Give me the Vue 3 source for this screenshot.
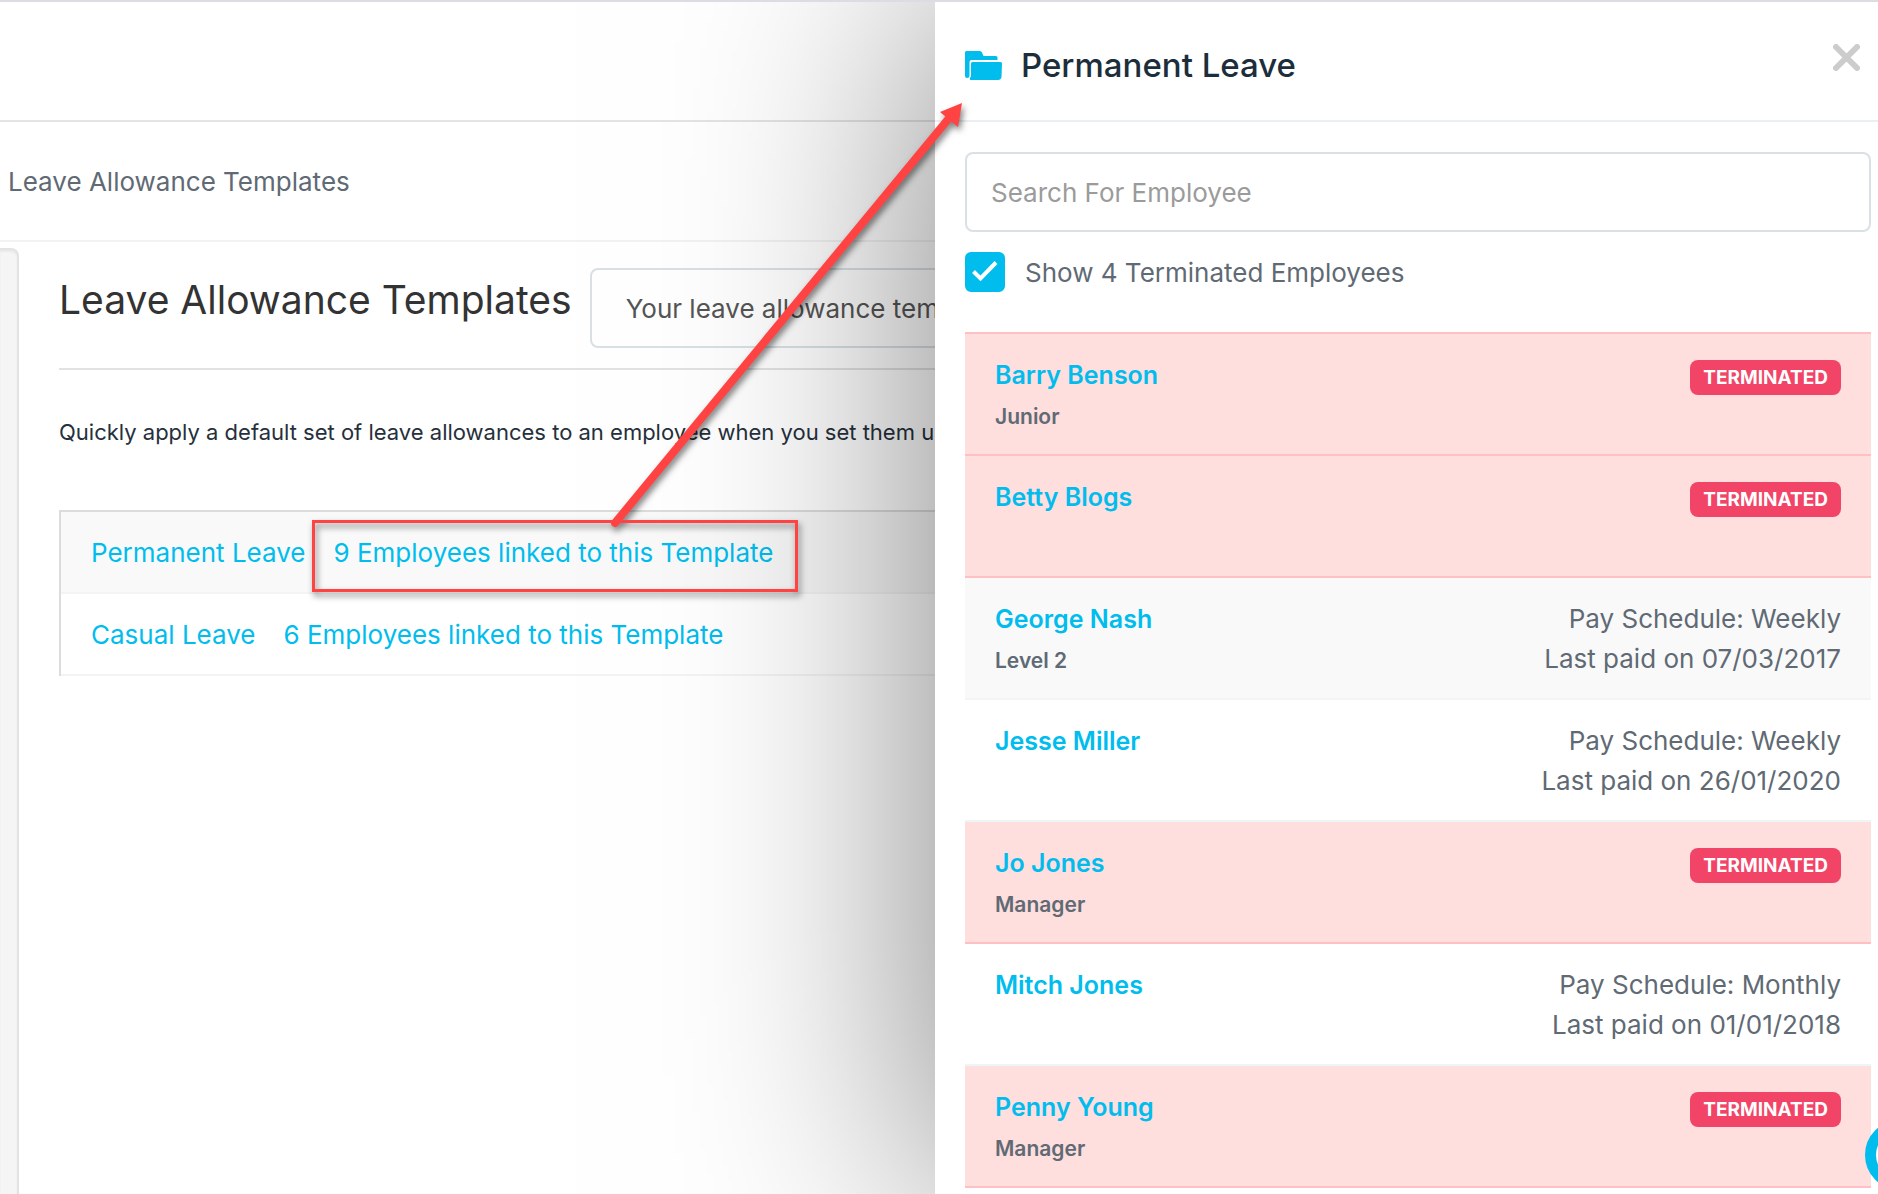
<script setup>
import { ref, computed } from 'vue'

const templates = [
  { name: 'Permanent Leave', count: 9 },
  { name: 'Casual Leave', count: 6 }
]

const employees = [
  { name: 'Barry Benson', role: 'Junior', terminated: true },
  { name: 'Betty Blogs', role: '', terminated: true },
  { name: 'George Nash', role: 'Level 2', schedule: 'Weekly', paid: '07/03/2017' },
  { name: 'Jesse Miller', role: '', schedule: 'Weekly', paid: '26/01/2020' },
  { name: 'Jo Jones', role: 'Manager', terminated: true },
  { name: 'Mitch Jones', role: '', schedule: 'Monthly', paid: '01/01/2018' },
  { name: 'Penny Young', role: 'Manager', terminated: true }
]

const search = ref('')
const showTerminated = ref(true)

const visible = computed(() =>
  employees.filter(
    (e) =>
      (showTerminated.value || !e.terminated) &&
      e.name.toLowerCase().includes(search.value.toLowerCase())
  )
)
</script>

<template>
  <div class="page">
    <header class="topbar"></header>
    <nav class="crumbs" aria-label="Breadcrumb">Leave Allowance Templates</nav>

    <div class="body">
      <aside class="well"></aside>
      <main class="content">
        <div class="heading">
          <h1>Leave Allowance Templates</h1>
          <button type="button" class="picker">Your leave allowance templates</button>
        </div>
        <p class="intro">
          Quickly apply a default set of leave allowances to an employee when you set them up
        </p>
        <table class="templates">
          <tbody>
            <tr v-for="t in templates" :key="t.name">
              <td>
                <a href="#">{{ t.name }}</a>
                <a href="#" class="linked">{{ t.count }} Employees linked to this Template</a>
              </td>
            </tr>
          </tbody>
        </table>
      </main>
    </div>

    <section class="drawer" aria-label="Permanent Leave">
      <header class="drawer-head">
        <svg class="folder" viewBox="0 0 37 30" width="37" height="30" aria-hidden="true">
          <path
            d="M1.500 0H15Q16.500 0 17 1.500L18.500 5H31Q32.500 5 32.500 6.500V9H6.500Q4.500 9 4.500 11V25Q4.500 27 2 27Q0 27 0 25V1.500Q0 0 1.500 0Z"
          />
          <path d="M7.500 11H35.500Q37 11 37 12.500L36.500 26Q36 29 33 29H6Q4.500 29 4.800 27.500L6 25V12.500Q6 11 7.500 11Z" />
        </svg>
        <h2>Permanent Leave</h2>
        <button type="button" class="close" aria-label="Close">
          <svg viewBox="0 0 27 27" width="27" height="27" aria-hidden="true">
            <path d="M3 3L24 24M24 3L3 24" />
          </svg>
        </button>
      </header>

      <div class="drawer-body">
        <input
          v-model="search"
          class="search"
          type="text"
          placeholder="Search For Employee"
          aria-label="Search For Employee"
        />
        <label class="toggle">
          <span class="box">
            <input v-model="showTerminated" type="checkbox" />
            <svg viewBox="0 0 40 40" width="40" height="40" aria-hidden="true">
              <path d="M8.500 19.500L15.500 26.500L31 10.500" />
            </svg>
          </span>
          <span class="toggle-text">Show 4 Terminated Employees</span>
        </label>

        <ul class="list">
          <li v-for="e in visible" :key="e.name" :class="{ terminated: e.terminated }">
            <div class="who">
              <a href="#">{{ e.name }}</a>
              <span class="role">{{ e.role }}</span>
            </div>
            <span v-if="e.terminated" class="badge">TERMINATED</span>
            <div v-else class="pay">
              <span>Pay Schedule: {{ e.schedule }}</span>
              <span>Last paid on {{ e.paid }}</span>
            </div>
          </li>
        </ul>
      </div>
    </section>

    <button type="button" class="bubble" aria-label="Help"></button>

    <svg class="callout" width="1000" height="640" viewBox="0 0 1000 640" aria-hidden="true">
      <rect x="313.500" y="519.500" width="483" height="69" />
      <path class="shaft" d="M615 521L950 115" />
      <path class="tip" d="M962 101L940 110L958 125Z" />
    </svg>
  </div>
</template>

<style>
body {
  margin: 0;
}
</style>

<style scoped>
* {
  box-sizing: border-box;
}

.page {
  position: relative;
  min-height: 100vh;
  display: flex;
  flex-direction: column;
  overflow: hidden;
  border-top: 2px solid #dcdce2;
  background: #fff;
  color: #5f6a74;
  font: 400 26px/40px Inter, "Liberation Sans", sans-serif;
}

a {
  color: #00bdee;
  text-decoration: none;
}

button {
  font: inherit;
  cursor: pointer;
}

.topbar {
  height: 120px;
  border-bottom: 2px solid #e4e4e4;
}

.crumbs {
  padding: 40px 8px 38px;
  border-bottom: 2px solid #f2f2f2;
}

.body {
  flex: 1;
  display: flex;
  gap: 40px;
  padding-top: 6px;
}

.well {
  width: 19px;
  border: 2px solid #e3e3e3;
  border-left: 0;
  border-bottom: 0;
  border-radius: 0 8px 0 0;
  background: #f5f5f5;
  box-shadow: inset 0 2px 2px rgba(0, 0, 0, 0.05);
}

.content {
  flex: 1;
  min-width: 0;
  padding-top: 20px;
}

.heading {
  display: flex;
  gap: 18px;
  padding-bottom: 20px;
  border-bottom: 2px solid #e2e2e2;
}

h1 {
  margin: 0;
  color: #333;
  font-size: 39px;
  font-weight: 400;
  line-height: 64px;
  white-space: nowrap;
}

.picker {
  height: 80px;
  padding: 2px 34px 0;
  border: 2px solid #d9e1e5;
  border-radius: 8px;
  background: #fff;
  color: #555;
  white-space: nowrap;
}

.intro {
  margin: 42px 0 58px;
  color: #26303c;
  font-size: 22px;
  white-space: nowrap;
}

.templates {
  width: 100%;
  border-collapse: separate;
  border-spacing: 0;
  border-top: 2px solid #dcdcdc;
  border-left: 2px solid #dcdcdc;
}

.templates td {
  padding: 21px 30px 19px;
  border-bottom: 2px solid #f4f4f4;
}

.templates tr:first-child td {
  background: #f9f9f9;
}

.linked {
  margin-left: 28px;
}

.drawer {
  position: absolute;
  top: 0;
  right: 0;
  bottom: 0;
  width: 943px;
  max-width: 100%;
  background: #fff;
  box-shadow: 0 0 240px rgba(0, 0, 0, 0.5);
}

.drawer-head {
  display: flex;
  align-items: center;
  gap: 19px;
  height: 120px;
  padding: 10px 18px 0 30px;
  border-bottom: 2px solid #e9eff2;
}

.folder {
  fill: #00bdee;
}

h2 {
  flex: 1;
  margin: 0;
  padding-bottom: 2px;
  color: #1c2e3b;
  font-size: 33px;
  font-weight: 500;
}

.close {
  align-self: flex-start;
  display: flex;
  margin-top: 32px;
  padding: 0;
  border: 0;
  background: none;
}

.close path {
  fill: none;
  stroke: #ccc;
  stroke-width: 6;
  stroke-linecap: round;
}

.drawer-body {
  padding: 30px 7px 0 30px;
}

.search {
  display: block;
  width: 100%;
  height: 80px;
  padding: 0 24px;
  border: 2px solid #dae1e5;
  border-radius: 8px;
  background: #fff;
  color: #5f6a74;
  font: inherit;
}

.search::placeholder {
  color: #9b9b9b;
  opacity: 1;
}

.toggle {
  display: flex;
  gap: 20px;
  height: 40px;
  margin: 20px 0 40px;
}

.toggle-text {
  padding-top: 1px;
}

.box {
  display: grid;
}

.box > * {
  grid-area: 1 / 1;
}

.box input {
  appearance: none;
  width: 40px;
  height: 40px;
  margin: 0;
  border: 2px solid #00bdee;
  border-radius: 6px;
}

.box input:checked {
  background: #00bdee;
}

.box svg {
  fill: none;
  stroke: #fff;
  stroke-width: 4;
  pointer-events: none;
}

.list {
  margin: 0;
  padding: 0;
  list-style: none;
}

.list li {
  display: flex;
  justify-content: space-between;
  align-items: flex-start;
  padding: 21px 30px 17px;
  border-bottom: 2px solid #eff4f6;
}

.list li:nth-child(3) {
  background: #f9f9f9;
  border-bottom-color: #f4f4f4;
}

.list li.terminated {
  background: #ffdede;
  border-bottom-color: #ffc0c3;
}

.list li.terminated:first-child {
  border-top: 2px solid #ffc0c3;
}

.who,
.pay {
  display: flex;
  flex-direction: column;
}

.pay {
  text-align: right;
}

.who a {
  font-size: 25px;
  font-weight: 600;
}

.role {
  min-height: 40px;
  margin-top: 2px;
  font-size: 21px;
  font-weight: 600;
}

.badge {
  margin-top: 5px;
  padding: 0 13px;
  border-radius: 8px;
  background: #f24467;
  color: #fff;
  font-size: 19px;
  font-weight: 700;
  line-height: 35px;
}

.bubble {
  position: absolute;
  right: -57px;
  bottom: 4px;
  width: 70px;
  height: 70px;
  padding: 0;
  border: 11px solid #00bdee;
  border-radius: 50%;
  background: #fff;
}

.callout {
  position: absolute;
  top: 0;
  left: 0;
  pointer-events: none;
  fill: none;
  stroke: #ff4343;
  stroke-width: 3;
  filter: drop-shadow(2px 4px 3px rgba(0, 0, 0, 0.5));
}

.callout .shaft {
  stroke-width: 8;
  stroke-linecap: round;
}

.callout .tip {
  fill: #ff4343;
  stroke: none;
}
</style>
